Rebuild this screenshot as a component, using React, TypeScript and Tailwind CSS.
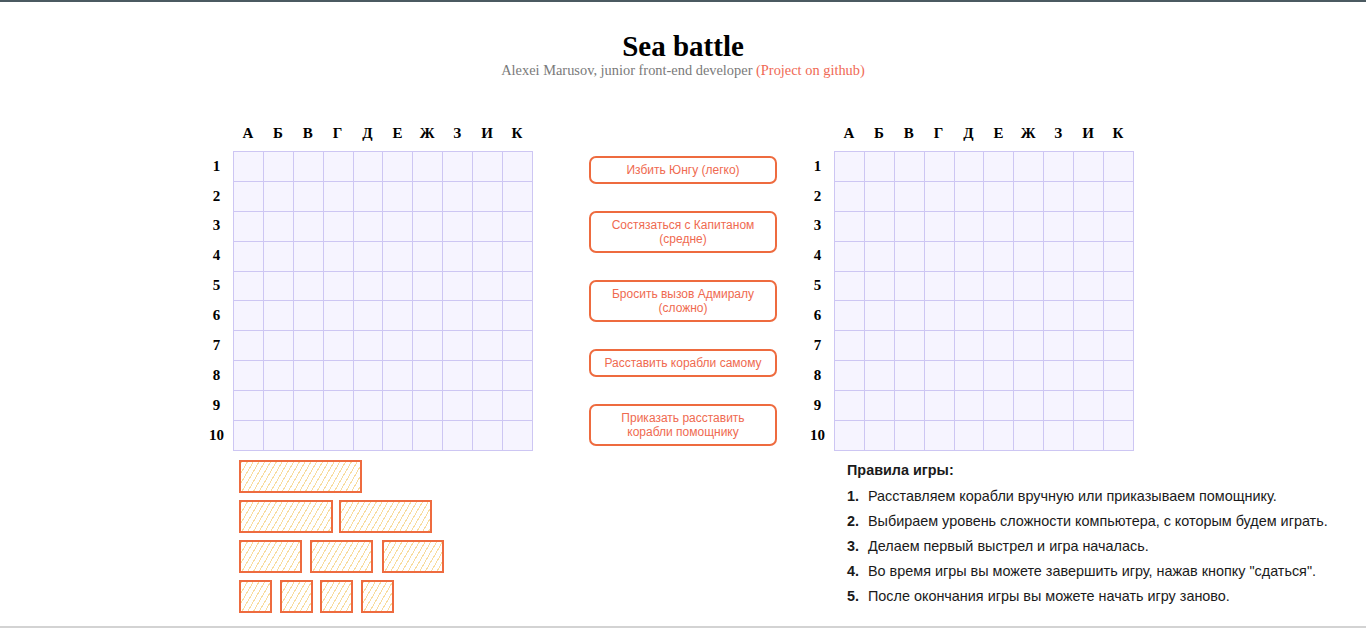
import React from "react";

const LETTERS = ["А", "Б", "В", "Г", "Д", "Е", "Ж", "З", "И", "К"];
const NUMS = [1, 2, 3, 4, 5, 6, 7, 8, 9, 10];

function Board() {
  return (
    <div className="flex flex-col w-[334px]">
      <div className="flex h-[20px] items-center pl-[33px]">
        {LETTERS.map((l) => (
          <div key={l} className="w-[29.9px] text-center text-[15px] font-bold leading-[20px] text-black">
            {l}
          </div>
        ))}
      </div>
      <div className="flex mt-[8px]">
        <div className="flex flex-col w-[33px]">
          {NUMS.map((n) => (
            <div key={n} className="h-[29.9px] flex items-center justify-center text-[15px] font-bold text-black">
              {n}
            </div>
          ))}
        </div>
        <div className="grid grid-cols-[repeat(10,29.9px)] grid-rows-[repeat(10,29.9px)] border-l border-t border-[#cdc6f3] bg-[#f6f4ff]">
          {Array.from({ length: 100 }).map((_, i) => (
            <div key={i} className="border-r border-b border-[#cdc6f3]" />
          ))}
        </div>
      </div>
    </div>
  );
}

function Ship({ w, className = "" }: { w: number; className?: string }) {
  return (
    <div
      className={
        "h-[33px] border-2 border-[#ee6b3f] bg-[repeating-linear-gradient(120deg,#f8dc9e_0px,#f8dc9e_1px,transparent_1px,transparent_5px)] " +
        className
      }
      style={{ width: w }}
    />
  );
}

const BUTTONS = [
  ["Избить Юнгу (легко)"],
  ["Состязаться с Капитаном", "(средне)"],
  ["Бросить вызов Адмиралу", "(сложно)"],
  ["Расставить корабли самому"],
  ["Приказать расставить", "корабли помощнику"],
];

const RULES = [
  "Расставляем корабли вручную или приказываем помощнику.",
  "Выбираем уровень сложности компьютера, с которым будем играть.",
  "Делаем первый выстрел и игра началась.",
  "Во время игры вы можете завершить игру, нажав кнопку \"сдаться\".",
  "После окончания игры вы можете начать игру заново.",
];

export default function App() {
  return (
    <div className="w-[1366px] h-[628px] bg-white border-t-2 border-[#4b5a61] flex flex-col overflow-hidden font-['Liberation_Serif',serif]">
      <header className="text-center pt-[28px]">
        <h1 className="text-[29px] leading-[32px] font-bold text-black">Sea battle</h1>
        <p className="text-[14.4px] leading-[16px] text-[#7a7a7a]">
          Alexei Marusov, junior front-end developer{" "}
          <span className="text-[#f06a55]">(Project on github)</span>
        </p>
      </header>
      <main className="flex mt-[45px] ml-[200px]">
        <div className="flex flex-col">
          <Board />
          <div className="flex flex-col gap-[7px] mt-[9px] ml-[39px]">
            <div className="flex">
              <Ship w={123} />
            </div>
            <div className="flex">
              <Ship w={94} />
              <Ship w={93} className="ml-[6px]" />
            </div>
            <div className="flex">
              <Ship w={63} />
              <Ship w={63} className="ml-[8px]" />
              <Ship w={62} className="ml-[9px]" />
            </div>
            <div className="flex">
              <Ship w={33} />
              <Ship w={33} className="ml-[8px]" />
              <Ship w={33} className="ml-[7px]" />
              <Ship w={33} className="ml-[8px]" />
            </div>
          </div>
        </div>
        <div className="flex flex-col gap-[27px] w-[188px] ml-[55px] mt-[33px] font-['Liberation_Sans',Arial,sans-serif]">
          {BUTTONS.map((lines, i) => (
            <button
              key={i}
              className="w-[188px] border-2 border-[#ee6b3f] rounded-[7px] py-[5px] text-[12px] leading-[14px] text-[#ef6a50] bg-white text-center"
            >
              {lines.map((l, j) => (
                <div key={j}>{l}</div>
              ))}
            </button>
          ))}
        </div>
        <div className="flex flex-col ml-[24px]">
          <Board />
          <div className="ml-[46px] mt-[9px] font-['Liberation_Sans',Arial,sans-serif] text-[#1a1a1a] text-[14.4px]">
            <div className="font-bold leading-[20px]">Правила игры:</div>
            <ol className="mt-[4px]">
              {RULES.map((r, i) => (
                <li key={i} className="flex h-[25px] leading-[25px] whitespace-nowrap">
                  <span className="w-[21px] font-bold">{i + 1}.</span>
                  <span>{r}</span>
                </li>
              ))}
            </ol>
          </div>
        </div>
      </main>
      <div className="mt-auto h-[2px] bg-[#d3d3d3]" />
    </div>
  );
}
